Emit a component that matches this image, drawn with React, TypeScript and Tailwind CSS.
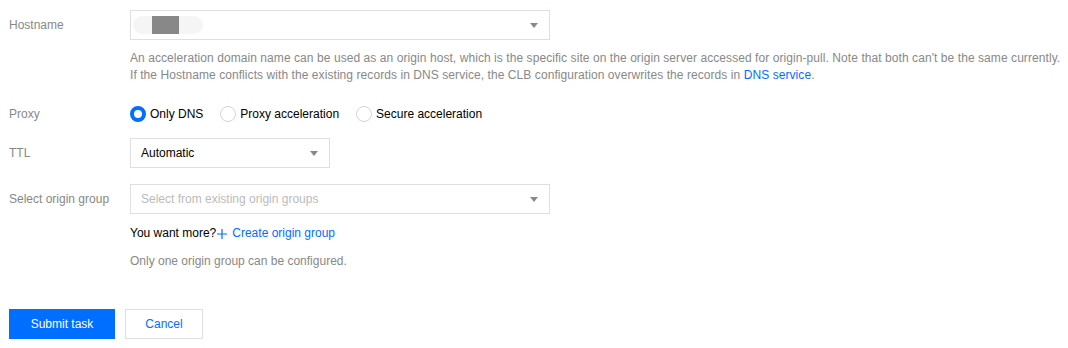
import React from "react";

function Caret() {
  return (
    <svg width="8" height="5" viewBox="0 0 8 5" className="shrink-0">
      <path d="M0 0 L8 0 L4 5 Z" fill="#888888" />
    </svg>
  );
}

function Row({ label, children }: { label: string; children: React.ReactNode }) {
  return (
    <div className="flex items-start">
      <div className="w-[121px] shrink-0 h-[30px] flex items-center text-[#888888]">{label}</div>
      <div className="flex-1">{children}</div>
    </div>
  );
}

function Radio({ label, checked }: { label: string; checked?: boolean }) {
  return (
    <label className="flex items-center gap-[4px]">
      {checked ? (
        <span className="w-4 h-4 rounded-full border-[4px] border-[#006eff] bg-white" />
      ) : (
        <span className="w-4 h-4 rounded-full border border-[#cfd5de] bg-white" />
      )}
      <span className="text-black">{label}</span>
    </label>
  );
}

function App() {
  return (
    <div className="w-[1068px] h-[348px] bg-white pl-[9px] pt-[10px] text-[12px] leading-[17px] font-['Liberation_Sans',Arial,sans-serif]">
      <Row label="Hostname">
        <div className="w-[420px] h-[30px] border border-[#dddfe6] flex items-center justify-between pl-[2px] pr-[11px]">
          <div className="w-[70px] h-[18px] rounded-full bg-[#f5f5f5] pl-[19px]">
            <div className="w-[27px] h-[18px] bg-[#888888]" />
          </div>
          <Caret />
        </div>
        <div className="mt-[10px] text-[#888888] tracking-[0.07px]">
          <p>
            An acceleration domain name can be used as an origin host, which is the specific site on the origin server accessed for origin-pull. Note that both can't be the same currently.
          </p>
          <p>
            If the Hostname conflicts with the existing records in DNS service, the CLB configuration overwrites the records in{" "}
            <a className="text-[#006eff]">DNS service</a>.
          </p>
        </div>
      </Row>

      <div className="mt-[15px]">
        <Row label="Proxy">
          <div className="h-[30px] flex items-center gap-[17px]">
            <Radio label="Only DNS" checked />
            <Radio label="Proxy acceleration" />
            <Radio label="Secure acceleration" />
          </div>
        </Row>
      </div>

      <div className="mt-[9px]">
        <Row label="TTL">
          <div className="w-[200px] h-[30px] border border-[#dddfe6] flex items-center justify-between pl-[10px] pr-[11px] text-black">
            <span>Automatic</span>
            <Caret />
          </div>
        </Row>
      </div>

      <div className="mt-[16px]">
        <Row label="Select origin group">
          <div className="w-[420px] h-[30px] border border-[#dddfe6] flex items-center justify-between pl-[10px] pr-[11px] text-[#bbbbbb]">
            <span>Select from existing origin groups</span>
            <Caret />
          </div>
          <div className="mt-[11px] flex items-center text-black">
            <span>You want more?</span>
            <span className="text-[#006eff] flex items-center">
              <svg width="12" height="12" viewBox="0 0 12 12" className="mr-[4px]">
                <path d="M6 1 V11 M1 6 H11" stroke="#006eff" strokeWidth="1.2" />
              </svg>
              Create origin group
            </span>
          </div>
          <div className="mt-[11px] text-[#888888]">Only one origin group can be configured.</div>
        </Row>
      </div>

      <div className="mt-[39px] flex gap-[10px]">
        <button className="w-[106px] h-[30px] bg-[#006eff] text-white">Submit task</button>
        <button className="w-[78px] h-[30px] border border-[#dddfe6] bg-white text-[#006eff]">Cancel</button>
      </div>
    </div>
  );
}

export default App;
